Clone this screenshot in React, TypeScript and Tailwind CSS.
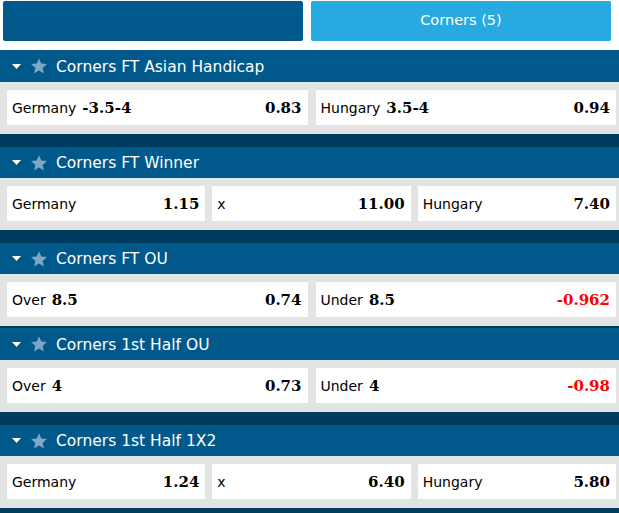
import React from 'react';

type Pick = { label: string; line?: string; odds: string; neg?: boolean };
type Market = { title: string; gap: number; head: number; picks: Pick[] };

const MARKETS: Market[] = [
  {
    title: 'Corners FT Asian Handicap',
    gap: 0,
    head: 32,
    picks: [
      { label: 'Germany', line: '-3.5-4', odds: '0.83' },
      { label: 'Hungary', line: '3.5-4', odds: '0.94' },
    ],
  },
  {
    title: 'Corners FT Winner',
    gap: 13,
    head: 31,
    picks: [
      { label: 'Germany', odds: '1.15' },
      { label: 'x', odds: '11.00' },
      { label: 'Hungary', odds: '7.40' },
    ],
  },
  {
    title: 'Corners FT OU',
    gap: 13,
    head: 31,
    picks: [
      { label: 'Over', line: '8.5', odds: '0.74' },
      { label: 'Under', line: '8.5', odds: '-0.962', neg: true },
    ],
  },
  {
    title: 'Corners 1st Half OU',
    gap: 2,
    head: 32,
    picks: [
      { label: 'Over', line: '4', odds: '0.73' },
      { label: 'Under', line: '4', odds: '-0.98', neg: true },
    ],
  },
  {
    title: 'Corners 1st Half 1X2',
    gap: 13,
    head: 31,
    picks: [
      { label: 'Germany', odds: '1.24' },
      { label: 'x', odds: '6.40' },
      { label: 'Hungary', odds: '5.80' },
    ],
  },
];

const sans = { fontFamily: '"DejaVu Sans", Verdana, sans-serif' };
const serif = { fontFamily: '"DejaVu Serif", Georgia, serif' };

const Star = () => (
  <svg width="16" height="16" viewBox="1 1.5 22 21" className="shrink-0">
    <path
      d="M12 1.5l3.1 7.2 7.8.7-5.9 5.2 1.8 7.7L12 18.2l-6.8 4.1 1.8-7.7-5.9-5.2 7.8-.7z"
      fill="#7ea6c5"
    />
  </svg>
);

const Caret = () => (
  <svg width="9" height="5" viewBox="0 0 9 5" className="shrink-0">
    <path d="M0 0h9L4.5 5z" fill="#ffffff" />
  </svg>
);

const PickCell = ({ pick }: { pick: Pick }) => (
  <div className="h-[35px] bg-white flex items-center justify-between pl-[5px] pr-[6px] pt-[2px]">
    <span className="text-[14px] text-black whitespace-nowrap" style={sans}>
      {pick.label}
      {pick.line && (
        <span className="font-bold text-[15px] ml-[6px]" style={serif}>
          {pick.line}
        </span>
      )}
    </span>
    <span
      className={pick.neg ? 'font-bold text-[15px] text-[#ff0000]' : 'font-bold text-[15px] text-black'}
      style={serif}
    >
      {pick.odds}
    </span>
  </div>
);

const MarketBlock = ({ m }: { m: Market }) => (
  <div>
    {m.gap > 0 && <div className="bg-[#003c5e]" style={{ height: m.gap }} />}
    <div className="bg-[#01598b] flex items-center pl-[12px]" style={{ height: m.head }}>
      <Caret />
      <div className="ml-[10px] flex">
        <Star />
      </div>
      <span className="ml-[9px] pt-[3px] text-white text-[15.5px]" style={sans}>
        {m.title}
      </span>
    </div>
    <div className="bg-[#e3e3e3] pt-[8px] pb-[9px] pl-[7px] pr-[3px]">
      <div
        className={
          m.picks.length === 3 ? 'grid grid-cols-3 gap-[7px]' : 'grid grid-cols-2 gap-[8px]'
        }
      >
        {m.picks.map((p, i) => (
          <PickCell key={i} pick={p} />
        ))}
      </div>
    </div>
  </div>
);

export default function App() {
  return (
    <div className="w-[619px] h-[513px] overflow-hidden bg-white">
      <div className="flex gap-[8px] pl-[3px] pr-[8px] pt-[1px] pb-[9px]">
        <div className="flex-1 h-[40px] rounded-[2px] bg-[#01598b]" />
        <div
          className="flex-1 h-[40px] rounded-[2px] bg-[#27aae1] flex items-center justify-center text-white text-[14.5px]"
          style={sans}
        >
          Corners (5)
        </div>
      </div>
      {MARKETS.map((m, i) => (
        <MarketBlock key={i} m={m} />
      ))}
      <div className="h-[13px] bg-[#003c5e]" />
    </div>
  );
}
